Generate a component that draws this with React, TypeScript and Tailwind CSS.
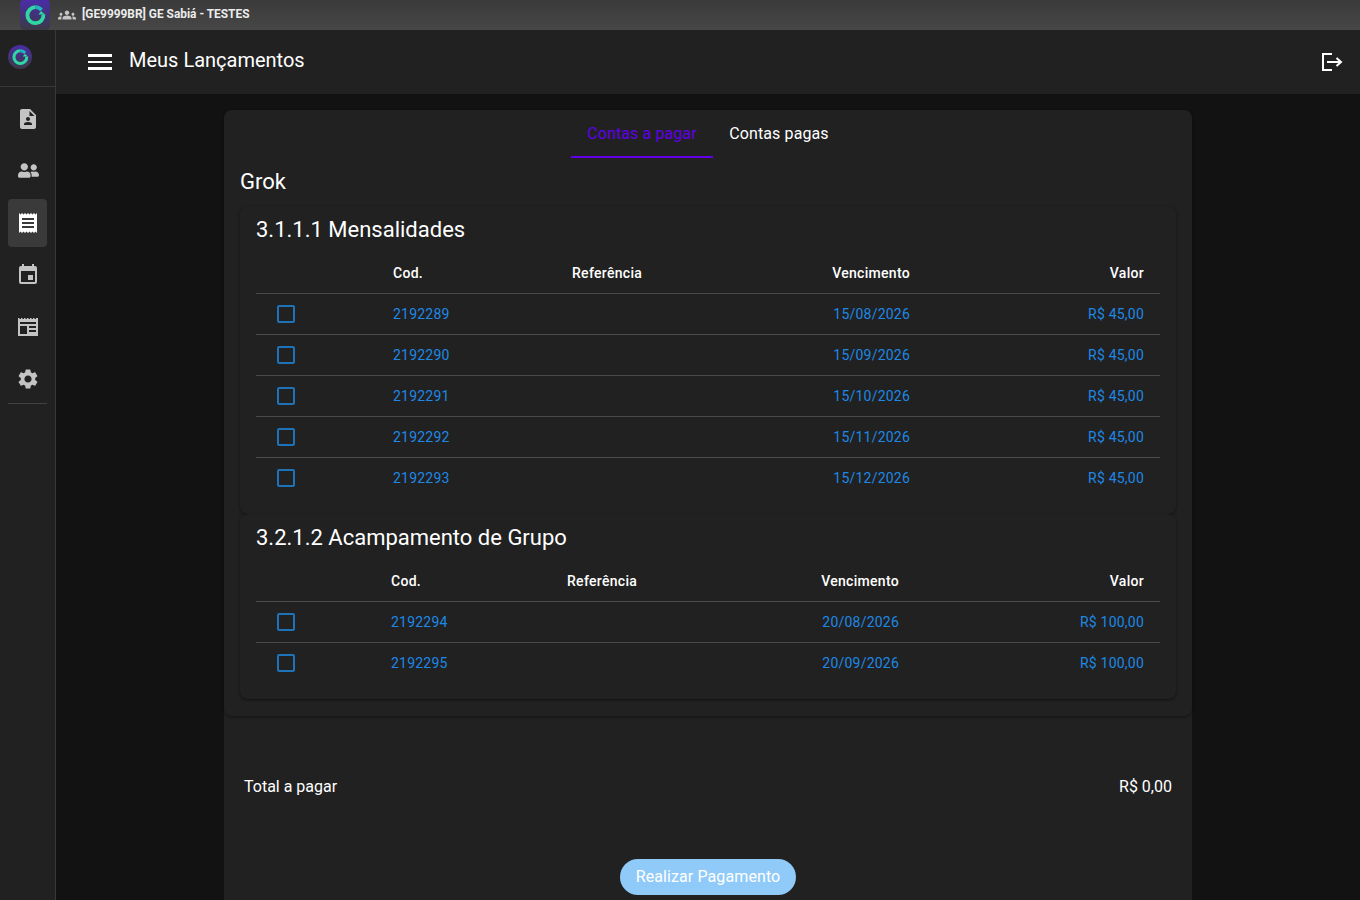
import { MdEvent, MdGroups, MdReceipt, MdSettings } from 'react-icons/md'
import { FaUserFriends } from 'react-icons/fa'

const groups = [
  {
    title: '3.1.1.1 Mensalidades',
    cols: ['w-[121px]', 'w-[179px]', 'w-[370px]', 'w-[234px]'],
    rows: [
      ['2192289', '15/08/2026', 'R$ 45,00'],
      ['2192290', '15/09/2026', 'R$ 45,00'],
      ['2192291', '15/10/2026', 'R$ 45,00'],
      ['2192292', '15/11/2026', 'R$ 45,00'],
      ['2192293', '15/12/2026', 'R$ 45,00'],
    ],
  },
  {
    title: '3.2.1.2 Acampamento de Grupo',
    cols: ['w-[119px]', 'w-[176px]', 'w-[364px]', 'w-[245px]'],
    rows: [
      ['2192294', '20/08/2026', 'R$ 100,00'],
      ['2192295', '20/09/2026', 'R$ 100,00'],
    ],
  },
]

function Logo({ size, id }: { size: number; id: string }) {
  return (
    <svg width={size} height={size} viewBox="0 0 30 30">
      <defs>
        <linearGradient id={id} x1="0" y1="0" x2="0" y2="1">
          <stop offset="0" stopColor="#4a2ca8" />
          <stop offset="1" stopColor="#3b3a45" />
        </linearGradient>
      </defs>
      <rect width="30" height="30" fill={`url(#${id})`} />
      {/* anel com abertura à direita */}
      <path d="M15.5 7.2 A8 8 0 1 0 23.4 14.5" fill="none" stroke="#2fd8a0" strokeWidth="3.8" />
      <path d="M15.5 7.2 A8 8 0 0 1 21.5 10" fill="none" stroke="#21b6bd" strokeWidth="3.8" />
      <path d="M25 14.5 H18.5 L21 11 Z" fill="#2fd8a0" />
    </svg>
  )
}

function ContactIcon() {
  return (
    <svg width="24" height="24" viewBox="0 0 24 24" fill="currentColor">
      <path d="M14 2H6c-1.1 0-2 .9-2 2v16c0 1.1.9 2 2 2h12c1.1 0 2-.9 2-2V8l-6-6zm-2 8c1.1 0 2 .9 2 2s-.9 2-2 2-2-.9-2-2 .9-2 2-2zm4 8H8v-.57c0-.81.48-1.53 1.22-1.85.85-.37 1.79-.58 2.78-.58s1.93.21 2.78.58c.74.32 1.22 1.04 1.22 1.85V18z" />
      <path d="M13.5 4v5h5z" fill="#212121" />
    </svg>
  )
}

function NewsIcon() {
  return (
    <svg width="24" height="24" viewBox="0 0 24 24" fill="currentColor">
      <path d="M2 3h1.5v1H5V3h1.5v1H8V3h1.5v1H11V3h1.5v1H14V3h1.5v1H17V3h1.5v1H20V3h2v18H2V3zm2 4v2h16V7H4zm0 4v8h7v-8H4zm9 0v2h7v-2h-7zm0 4v2h7v-2h-7z" />
    </svg>
  )
}

function LogoutIcon() {
  return (
    <svg width="24" height="24" viewBox="0 0 24 24" fill="none" stroke="#fff" strokeWidth="2">
      <path d="M12 4H3v16h9" />
      <path d="M7 12h14" />
      <path d="M16.5 8l4.5 4-4.5 4" />
    </svg>
  )
}

function SideButton({ active, children }: { active?: boolean; children: React.ReactNode }) {
  return (
    <div className={`mb-[4px] flex h-[48px] w-[39px] items-center justify-center rounded pl-px ${active ? 'bg-[#3a3a3a] text-white' : 'text-[#c4c4c4]'}`}>
      {children}
    </div>
  )
}

function GroupCard({ group }: { group: (typeof groups)[number] }) {
  return (
    <div className="rounded-lg bg-[#212121] px-4 pb-[15px] shadow-[0_1px_3px_rgba(0,0,0,0.45)]">
      <h2 className="h-[46px] pt-[9px] text-[22px] leading-[30px] text-white">{group.title}</h2>
      <table className="w-[904px] table-fixed border-separate border-spacing-0 text-[14px] tracking-[0.22px]">
        <thead>
          <tr className="h-[42px] text-white">
            <th className={`${group.cols[0]} border-b border-[#4a4a4a]`}></th>
            <th className={`${group.cols[1]} border-b border-[#4a4a4a] px-4 pt-[2px] text-left font-medium tracking-[0.3px]`}>Cod.</th>
            <th className={`${group.cols[2]} border-b border-[#4a4a4a] px-4 pt-[2px] text-left font-medium tracking-[0.3px]`}>
              <div className="flex justify-between">
                <span>Referência</span>
                <span>Vencimento</span>
              </div>
            </th>
            <th className={`${group.cols[3]} border-b border-[#4a4a4a] px-4 pt-[2px] text-right font-medium tracking-[0.3px]`}>Valor</th>
          </tr>
        </thead>
        <tbody>
          {group.rows.map((row, i) => {
            const line = i < group.rows.length - 1 ? 'border-[#4a4a4a]' : 'border-transparent'
            return (
              <tr key={row[0]} className="h-[41px] text-[#1e88e5]">
                <td className={`border-b ${line}`}>
                  <div className="ml-[21px] h-[18px] w-[18px] rounded-[2px] border-2 border-[#1e72b8]" />
                </td>
                <td className={`border-b px-4 ${line}`}>{row[0]}</td>
                <td className={`border-b px-4 text-right ${line}`}>{row[1]}</td>
                <td className={`border-b px-4 text-right ${line}`}>{row[2]}</td>
              </tr>
            )
          })}
        </tbody>
      </table>
    </div>
  )
}

export default function App() {
  return (
    <div className="flex h-[900px] flex-col overflow-hidden bg-[#121212] font-['Roboto',sans-serif] text-white">
      {/* barra superior */}
      <div className="flex h-[30px] shrink-0 items-center bg-gradient-to-b from-[#3a3a3a] to-[#474747]">
        <div className="ml-[20px] overflow-hidden rounded-[4px]">
          <Logo size={30} id="logoTop" />
        </div>
        <MdGroups size={18} className="ml-[8px] text-[#c4c4c4]" />
        <span className="ml-[6px] text-[11.9px] font-bold text-[#ececec]">[GE9999BR] GE Sabiá - TESTES</span>
      </div>

      <div className="flex min-h-0 flex-1">
        {/* menu lateral */}
        <aside className="flex w-[56px] shrink-0 flex-col items-center border-r border-[#383838] bg-[#212121]">
          <div className="flex h-[57px] w-full items-start justify-center border-b border-[#383838] pt-[15px] pr-[15px]">
            <div className="overflow-hidden rounded-full">
              <Logo size={24} id="logoSide" />
            </div>
          </div>
          <div className="flex flex-col pt-[8px]">
            <SideButton><ContactIcon /></SideButton>
            <SideButton><div className="-mt-[2px]"><FaUserFriends size={21} /></div></SideButton>
            <SideButton active><MdReceipt size={24} /></SideButton>
            <SideButton><MdEvent size={24} /></SideButton>
            <SideButton><NewsIcon /></SideButton>
            <SideButton><MdSettings size={24} /></SideButton>
          </div>
          <div className="-mt-[4px] h-px w-[39px] bg-[#424242]" />
        </aside>

        <div className="flex min-w-0 flex-1 flex-col">
          {/* cabeçalho */}
          <header className="flex h-[64px] shrink-0 items-center bg-[#212121] pl-[32px] pr-[16px]">
            <div className="flex w-[24px] flex-col gap-[4px]">
              <div className="h-[2.5px] bg-white" />
              <div className="h-[2.5px] bg-white" />
              <div className="h-[2.5px] bg-white" />
            </div>
            <h1 className="ml-[17px] pb-[5px] text-[20px] leading-none">Meus Lançamentos</h1>
            <div className="ml-auto"><LogoutIcon /></div>
          </header>

          <main className="mx-auto mt-[16px] w-[968px] flex-1 rounded-t-lg bg-[#212121]">
            <div className="rounded-lg px-4 pb-[17px] shadow-[0_1px_3px_rgba(0,0,0,0.45)]">
              <div className="flex h-[48px] justify-center text-[16px] tracking-[0.1px]">
                <div className="flex w-[142px] items-center justify-center border-b-2 border-[#6200ea] pt-[2px] text-[#6200ea]">Contas a pagar</div>
                <div className="flex w-[132px] items-center justify-center text-white">Contas pagas</div>
              </div>
              <h2 className="h-[48px] pt-[9px] text-[22px] leading-[30px]">Grok</h2>
              <GroupCard group={groups[0]} />
              <GroupCard group={groups[1]} />
            </div>

            <div className="mt-[61px] flex items-center justify-between px-5 text-[16px] leading-[20px]">
              <span>Total a pagar</span>
              <span>R$ 0,00</span>
            </div>
            <div className="mt-[62px] flex justify-center">
              <button className="h-[36px] w-[176px] rounded-full bg-[#90caf9] text-[16px] tracking-[0.1px] text-white">Realizar Pagamento</button>
            </div>
          </main>
        </div>
      </div>
    </div>
  )
}
